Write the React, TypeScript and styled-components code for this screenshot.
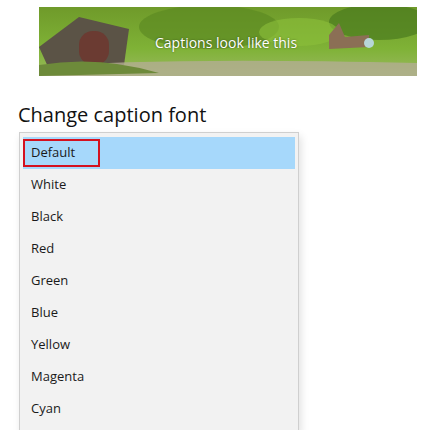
import React from "react";
import styled, { createGlobalStyle } from "styled-components";

const Global = createGlobalStyle`
  body { margin: 0; background: #fff; font-family: "Segoe UI", "Open Sans", "Noto Sans", sans-serif; }
`;

const Page = styled.div`
  width: 437px;
  height: 430px;
  overflow: hidden;
  padding-top: 7px;
  box-sizing: border-box;
`;

const Preview = styled.div`
  position: relative;
  margin-left: 39px;
  width: 378px;
  height: 69px;
  overflow: hidden;
`;

const Caption = styled.span`
  position: absolute;
  left: 116px;
  top: 26px;
  color: #fff;
  font-size: 14px;
  text-shadow: 0 0 2px rgba(0, 0, 0, 0.5);
`;

const Heading = styled.h2`
  margin: 26px 0 0 18px;
  font-size: 20px;
  font-weight: 400;
  color: #111;
  line-height: 26px;
`;

const List = styled.div`
  margin: 4px 0 0 19px;
  width: 280px;
  height: 300px;
  box-sizing: border-box;
  border: 1px solid #cfcfcf;
  border-bottom: none;
  background: #f2f2f2;
  padding: 4px 3px 0;
  box-shadow: 2px 4px 8px rgba(0, 0, 0, 0.12);
`;

const Row = styled.div<{ $selected?: boolean }>`
  height: 32px;
  display: flex;
  align-items: center;
  background: ${(p) => (p.$selected ? "#a6d8fb" : "transparent")};
  font-size: 13px;
  color: #1a1a1a;
`;

const Label = styled.span<{ $focus?: boolean }>`
  display: flex;
  align-items: center;
  height: 28px;
  padding: 0 6px 3px;
  width: ${(p) => (p.$focus ? "77px" : "auto")};
  box-sizing: border-box;
  border: 2px solid ${(p) => (p.$focus ? "#d4111f" : "transparent")};
`;

const Scene = () => (
  <svg width="378" height="69" viewBox="0 0 378 69">
    <defs>
      <linearGradient id="sky" x1="0" y1="0" x2="0" y2="1">
        <stop offset="0" stopColor="#6f9a2a" />
        <stop offset="0.6" stopColor="#7fb236" />
        <stop offset="1" stopColor="#9ab860" />
      </linearGradient>
    </defs>
    <rect width="378" height="69" fill="url(#sky)" />
    <ellipse cx="170" cy="20" rx="70" ry="22" fill="#5d8a22" opacity="0.7" />
    <ellipse cx="340" cy="15" rx="50" ry="18" fill="#4a7a1e" opacity="0.7" />
    <ellipse cx="260" cy="25" rx="40" ry="14" fill="#8cc03a" opacity="0.6" />
    <path d="M0 40 L40 10 L90 22 L85 58 L10 62 Z" fill="#5b5346" />
    <rect x="40" y="24" width="30" height="34" rx="14" fill="#6b3b32" />
    <path d="M0 60 Q120 50 378 56 L378 69 L0 69 Z" fill="#b3ae92" opacity="0.8" />
    <path d="M290 28 L300 16 L306 30 L330 28 L330 40 L290 42 Z" fill="#8b6f55" />
    <circle cx="330" cy="36" r="5" fill="#b7d6d8" />
    <path d="M0 58 Q60 48 120 66 L0 69 Z" fill="#6d8a3a" />
  </svg>
);

const colors = ["Default", "White", "Black", "Red", "Green", "Blue", "Yellow", "Magenta", "Cyan"];

export default function App() {
  return (
    <Page>
      <Global />
      <Preview>
        <Scene />
        <Caption>Captions look like this</Caption>
      </Preview>
      <Heading>Change caption font</Heading>
      <List>
        {colors.map((c, i) => (
          <Row key={c} $selected={i === 0}>
            <Label $focus={i === 0}>{c}</Label>
          </Row>
        ))}
      </List>
    </Page>
  );
}
